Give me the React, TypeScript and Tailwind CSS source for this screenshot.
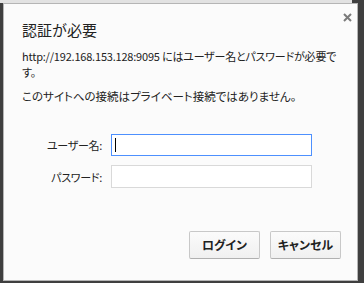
import React from "react";

const font = { fontFamily: '"Noto Sans CJK JP", "Noto Sans", sans-serif' };

export default function App() {
  return (
    <div
      className="w-[364px] h-[283px] bg-[#3f3f3f] flex flex-col overflow-hidden"
      style={font}
    >
      <div className="h-[3px] w-[352px] bg-[#e2e2e2] shrink-0" />
      <div className="flex pl-[3px]">
        <div className="relative w-[355px] h-[278px] bg-[#fbfbfb] border border-[#b5b5b5] flex flex-col pl-[18px] pr-[16px] pt-[16px] text-[#222]">
          <button className="absolute top-[7px] right-[4px] w-[12px] h-[12px] flex items-center justify-center">
            <svg width="9" height="9" viewBox="0 0 9 9">
              <path d="M1 1 L8 8 M8 1 L1 8" stroke="#7b7b7b" strokeWidth="2" />
            </svg>
          </button>
          <div className="text-[15px] leading-[20px] text-[#222]">認証が必要</div>
          <div className="mt-[8px] text-[11px] leading-[16px] tracking-[-0.2px] whitespace-nowrap [font-feature-settings:'palt']">
            http://192.168.153.128:9095 にはユーザー名とパスワードが必要で
            <br />
            す。
          </div>
          <div className="mt-[8px] text-[11.5px] leading-[16px] whitespace-nowrap [font-feature-settings:'palt']">
            このサイトへの接続はプライベート接続ではありません。
          </div>
          <div className="mt-[30px] ml-[20px] flex flex-col gap-[9px]">
            <div className="flex items-center gap-[9px]">
              <div className="w-[60px] text-right text-[11px] leading-[16px] tracking-[-0.3px] whitespace-nowrap [font-feature-settings:'palt']">
                ユーザー名:
              </div>
              <div className="w-[201px] h-[22px] bg-white border border-[#4d90fe] flex items-center pl-[3px]">
                <span className="w-[1px] h-[14px] bg-black" />
              </div>
            </div>
            <div className="flex items-center gap-[9px]">
              <div className="w-[60px] text-right text-[11px] leading-[16px] tracking-[-0.3px] whitespace-nowrap [font-feature-settings:'palt']">
                パスワード:
              </div>
              <div className="w-[201px] h-[23px] bg-white border border-[#d9d9d9]" />
            </div>
          </div>
          <div className="mt-[43px] flex justify-end gap-[10px]">
            <button className="w-[71px] h-[28px] rounded-[2px] border border-[#c8c8c8] border-b-[#b0b0b0] bg-gradient-to-b from-[#fbfbfb] to-[#f0f0f0] text-[12px] font-bold text-[#222] [font-feature-settings:'palt']">
              ログイン
            </button>
            <button className="w-[71px] h-[28px] rounded-[2px] border border-[#c8c8c8] border-b-[#b0b0b0] bg-gradient-to-b from-[#fbfbfb] to-[#f0f0f0] text-[12px] font-bold text-[#222] [font-feature-settings:'palt']">
              キャンセル
            </button>
          </div>
        </div>
      </div>
    </div>
  );
}
